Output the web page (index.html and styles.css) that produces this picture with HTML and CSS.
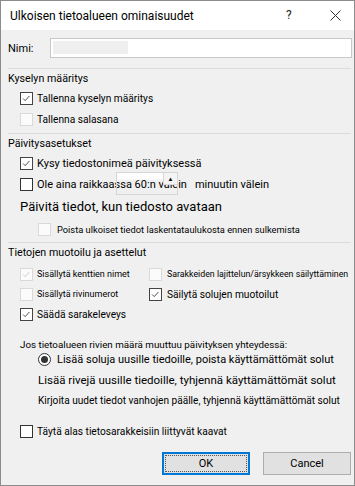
FILE: index.html
```html
<!DOCTYPE html>
<html>
<head>
    <title>Ulkoisen tietoalueen ominaisuudet</title>
    <link rel="stylesheet" href="styles.css">
</head>
<body>
    <div class="dialog">
        <div class="titlebar">
            <span class="title">Ulkoisen tietoalueen ominaisuudet</span>
            <span class="help">?</span>
            <span class="close">
                <svg width="11" height="11" viewBox="0 0 11 11"><path d="M0.5 0.5 L10.5 10.5 M10.5 0.5 L0.5 10.5" stroke="#333" stroke-width="1" fill="none"/></svg>
            </span>
        </div>

        <div class="content">
            <div class="name-row">
                <label>Nimi:</label>
                <div class="name-input"><span class="name-value"></span></div>
            </div>

            <!-- Kyselyn määritys -->
            <div class="group group-first">
                <div class="group-title"><span>Kyselyn määritys</span></div>
                <div class="check-row t-md">
                    <span class="box checked"><svg viewBox="0 0 13 13"><path d="M2.5 6.5 L5 9 L10 3.5"/></svg></span>
                    <span>Tallenna kyselyn määritys</span>
                </div>
                <div class="check-row t-md">
                    <span class="box disabled"></span>
                    <span>Tallenna salasana</span>
                </div>
            </div>

            <!-- Päivitysasetukset -->
            <div class="group group-second">
                <div class="group-title"><span>Päivitysasetukset</span></div>
                <div class="check-row">
                    <span class="box checked"><svg viewBox="0 0 13 13"><path d="M2.5 6.5 L5 9 L10 3.5"/></svg></span>
                    <span>Kysy tiedostonimeä päivityksessä</span>
                </div>
                <div class="check-row spin-row">
                    <span class="box"></span>
                    <span>Ole aina raikkaassa 60:n välein</span>
                    <span class="after-spin">minuutin välein</span>
                    <span class="spinner"><span class="spin-up">&#9650;</span></span>
                </div>
                <div class="big-row">Päivitä tiedot, kun tiedosto avataan</div>
                <div class="check-row sub-row">
                    <span class="box disabled"></span>
                    <span>Poista ulkoiset tiedot laskentataulukosta ennen sulkemista</span>
                </div>
            </div>

            <!-- Tietojen muotoilu ja asettelut -->
            <div class="group group-third">
                <div class="group-title"><span>Tietojen muotoilu ja asettelut</span></div>
                <div class="format-grid">
                    <div class="check-row t-sm">
                        <span class="box disabled"><svg viewBox="0 0 13 13"><path d="M2.5 6.5 L5 9 L10 3.5"/></svg></span>
                        <span>Sisällytä kenttien nimet</span>
                    </div>
                    <div class="check-row t-xs col2">
                        <span class="box disabled"></span>
                        <span>Sarakkeiden lajittelun/ärsykkeen säilyttäminen</span>
                    </div>
                    <div class="check-row t-sm">
                        <span class="box disabled"></span>
                        <span>Sisällytä rivinumerot</span>
                    </div>
                    <div class="check-row t-md col2">
                        <span class="box checked"><svg viewBox="0 0 13 13"><path d="M2.5 6.5 L5 9 L10 3.5"/></svg></span>
                        <span>Säilytä solujen muotoilut</span>
                    </div>
                    <div class="check-row t-md">
                        <span class="box checked"><svg viewBox="0 0 13 13"><path d="M2.5 6.5 L5 9 L10 3.5"/></svg></span>
                        <span>Säädä sarakeleveys</span>
                    </div>
                </div>

                <div class="resize">
                    <div class="resize-label">Jos tietoalueen rivien määrä muuttuu päivityksen yhteydessä:</div>
                    <div class="radio-row">
                        <span class="radio"><span class="dot"></span></span>
                        <span>Lisää soluja uusille tiedoille, poista käyttämättömät solut</span>
                    </div>
                    <div class="option-row">Lisää rivejä uusille tiedoille, tyhjennä käyttämättömät solut</div>
                    <div class="option-row option-small">Kirjoita uudet tiedot vanhojen päälle, tyhjennä käyttämättömät solut</div>
                </div>

                <div class="check-row fill-row t-md">
                    <span class="box"></span>
                    <span>Täytä alas tietosarakkeisiin liittyvät kaavat</span>
                </div>
            </div>

            <div class="buttons">
                <button class="btn btn-default"><span>OK</span></button>
                <button class="btn">Cancel</button>
            </div>
        </div>
    </div>
</body>
</html>
```

FILE: styles.css
```css
/* Ikkunan perusasettelu */
html, body {
    margin: 0;
    padding: 0;
}

body {
    width: 355px;
    height: 486px;
    font-family: Roboto, "Liberation Sans", sans-serif;
    font-size: 11px;
    color: #000;
    background: #f0f0f0;
}

.dialog {
    box-sizing: border-box;
    width: 355px;
    height: 486px;
    border: 1px solid #8c8c8c;
    background: #f0f0f0;
    overflow: hidden;
}

.titlebar {
    height: 29px;
    background: #fff;
    display: flex;
    align-items: center;
    position: relative;
}

.title {
    margin-left: 9px;
    font-size: 12px;
}

.help {
    position: absolute;
    left: 285px;
    top: 7px;
    font-size: 12px;
    color: #222;
}

.close {
    position: absolute;
    left: 329px;
    top: 9px;
    width: 11px;
    height: 11px;
}

.close svg {
    display: block;
}

.content {
    padding: 8px 2px 0 7px;
}

/* tekstikoot */
.t-md {
    font-size: 10.2px;
}

.t-sm {
    font-size: 9px;
}

.t-xs {
    font-size: 8.8px;
}

/* Nimi */
.name-row {
    display: flex;
    align-items: center;
    height: 20px;
}

.name-row label {
    width: 42px;
}

.name-input {
    box-sizing: border-box;
    width: 302px;
    height: 20px;
    border: 1px solid #c9c9c9;
    background: #fff;
    padding: 2px 0 0 2px;
}

.name-value {
    display: block;
    width: 75px;
    height: 13px;
    background: #efefef;
}

/* Ryhmät */
.group-first {
    margin-top: 10px;
}

.group-second {
    margin-top: 3px;
}

.group-third {
    margin-top: 1px;
}

.group-title {
    height: 20px;
    display: flex;
    align-items: center;
    border-top: 1px solid #dcdcdc;
    box-sizing: border-box;
    margin-right: 1px;
    font-size: 10.7px;
}

.check-row {
    display: flex;
    align-items: center;
    height: 21px;
    padding-left: 12px;
    white-space: nowrap;
}

.box {
    box-sizing: border-box;
    width: 13px;
    height: 13px;
    border: 1px solid #333;
    background: #fff;
    margin-right: 4px;
    flex: none;
}

.box svg {
    display: block;
    width: 11px;
    height: 11px;
}

.box svg path {
    fill: none;
    stroke: #444;
    stroke-width: 1.1;
}

.box.checked {
    border-color: #444;
}

.box.disabled {
    border-color: #d9d9d9;
    background: #fbfbfb;
}

.box.disabled svg path {
    stroke: #c8c8c8;
}

/* Päivitysväli */
.spin-row {
    position: relative;
}

.after-spin {
    margin-left: 8px;
}

.spinner {
    position: absolute;
    left: 108px;
    top: -2px;
    box-sizing: border-box;
    width: 62px;
    height: 23px;
    border: 1px solid #d6d6d6;
    background: linear-gradient(to bottom, rgba(255,255,255,0.9) 0, rgba(255,255,255,0.9) 6px, rgba(255,255,255,0) 7px);
}

.spin-up {
    position: absolute;
    right: 0;
    top: 0;
    box-sizing: border-box;
    width: 14px;
    height: 12px;
    border-left: 1px solid #d6d6d6;
    border-bottom: 1px solid #d6d6d6;
    background: #f4f4f4;
    font-size: 6px;
    line-height: 11px;
    text-align: center;
}

.big-row {
    height: 23px;
    display: flex;
    align-items: center;
    padding-left: 12px;
    font-size: 13px;
}

.sub-row {
    height: 23px;
    padding-left: 30px;
    font-size: 9.3px;
}

.sub-row .box {
    margin-right: 6px;
}

/* Muotoilu */
.format-grid {
    display: grid;
    grid-template-columns: 141px auto;
    padding-top: 2px;
}

.format-grid .check-row {
    height: 20px;
}

.format-grid .col2 {
    padding-left: 0;
}

.format-grid .col2 .box {
    margin-right: 5px;
}

.resize {
    margin-top: 12px;
    padding-left: 12px;
}

.resize-label {
    height: 16px;
    display: flex;
    align-items: center;
    white-space: nowrap;
    font-size: 9.8px;
}

.radio-row {
    height: 15px;
    display: flex;
    align-items: center;
    padding-left: 18px;
    font-size: 11px;
    white-space: nowrap;
}

.radio {
    box-sizing: border-box;
    width: 13px;
    height: 13px;
    border: 1px solid #333;
    border-radius: 50%;
    background: #fff;
    display: flex;
    align-items: center;
    justify-content: center;
    margin-right: 6px;
}

.dot {
    width: 7px;
    height: 7px;
    border-radius: 50%;
    background: #333;
}

.option-row {
    height: 20px;
    margin-top: 3px;
    display: flex;
    align-items: center;
    padding-left: 18px;
    font-size: 11.5px;
    white-space: nowrap;
}

.option-small {
    margin-top: 0;
    font-size: 10.1px;
}

.fill-row {
    margin-top: 11px;
    height: 20px;
}

/* Painikkeet */
.buttons {
    display: flex;
    justify-content: flex-end;
    gap: 13px;
    margin-top: 11px;
    padding-right: 1px;
}

.btn {
    box-sizing: border-box;
    width: 88px;
    height: 23px;
    border: 1px solid #adadad;
    background: #e1e1e1;
    font-family: Roboto, "Liberation Sans", sans-serif;
    font-size: 11px;
    color: #000;
    padding: 0;
}

.btn-default {
    border: 2px solid #0078d7;
    padding: 1px;
}

.btn-default span {
    display: flex;
    align-items: center;
    justify-content: center;
    height: 100%;
    box-sizing: border-box;
    border: 1px dotted #555;
}
```
